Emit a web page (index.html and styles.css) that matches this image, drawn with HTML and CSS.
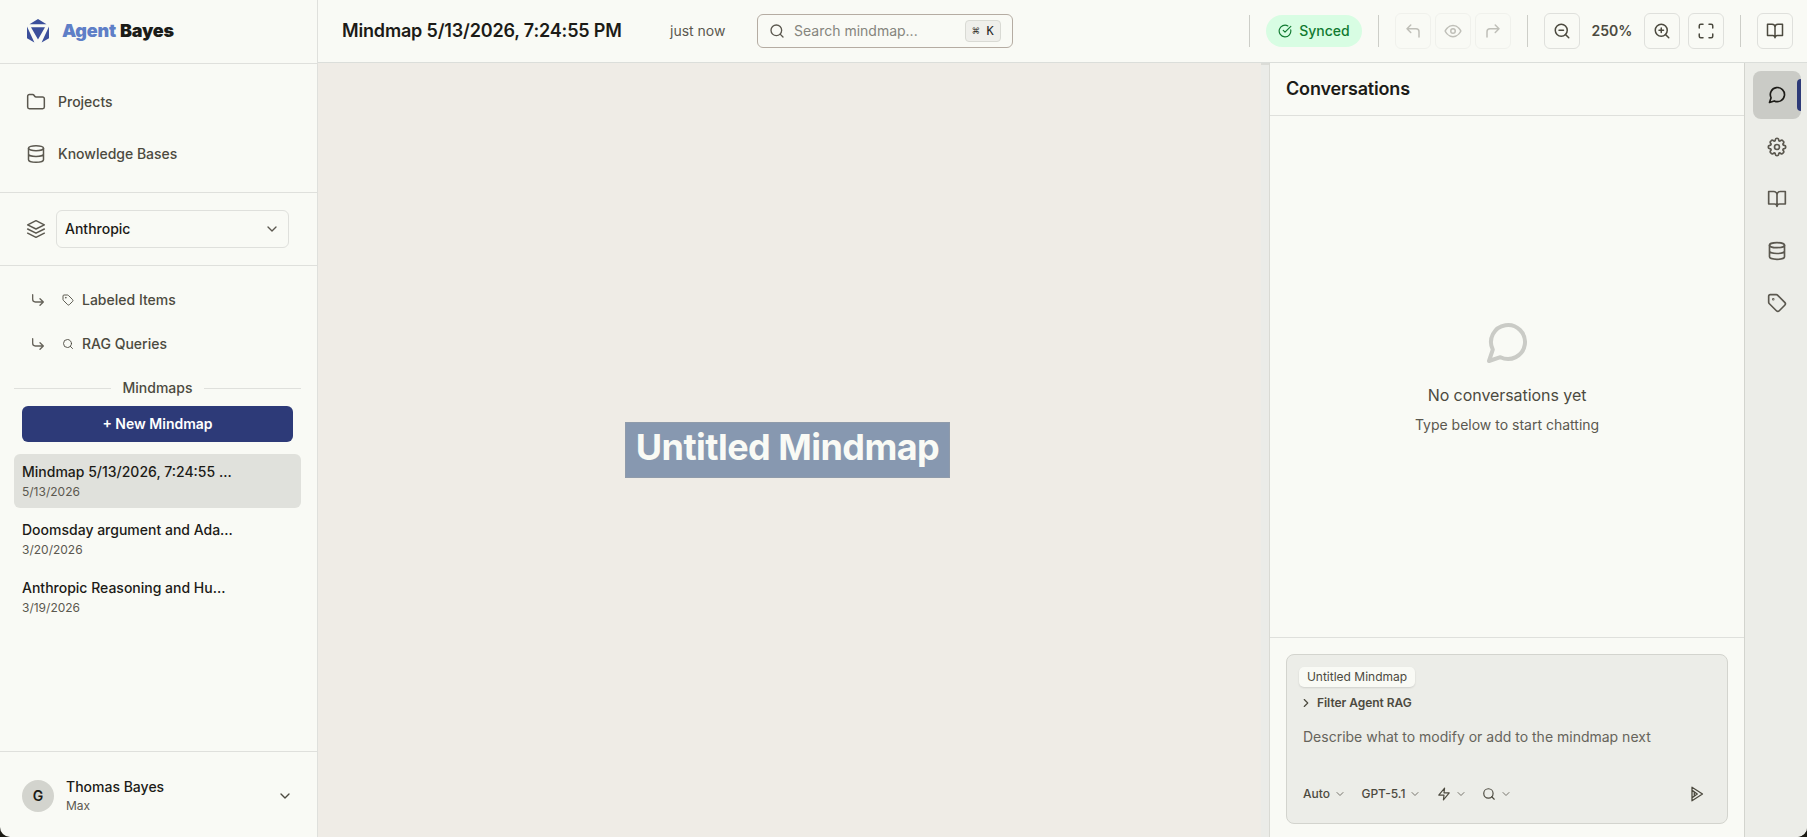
FILE: index.html
```
<!DOCTYPE html>
<html lang="en">
<head>
<meta charset="utf-8">
<title>Agent Bayes</title>
<link rel="stylesheet" href="styles.css">
</head>
<body>
<svg class="defs" aria-hidden="true">
  <symbol id="folder" viewBox="0 0 24 24"><path d="M4 20h16a2 2 0 0 0 2-2V8a2 2 0 0 0-2-2h-7.93a2 2 0 0 1-1.66-.9l-.82-1.2A2 2 0 0 0 7.93 3H4a2 2 0 0 0-2 2v13a2 2 0 0 0 2 2Z"/></symbol>
  <symbol id="database" viewBox="0 0 24 24"><ellipse cx="12" cy="5" rx="9" ry="3"/><path d="M3 5v14a9 3 0 0 0 18 0V5M3 12a9 3 0 0 0 18 0"/></symbol>
  <symbol id="layers" viewBox="0 0 24 24"><path d="m12 2-10 5 10 5 10-5zM2 12l10 5 10-5M2 17l10 5 10-5"/></symbol>
  <symbol id="down" viewBox="0 0 24 24"><path d="m6 9 6 6 6-6"/></symbol>
  <symbol id="right" viewBox="0 0 24 24"><path d="m9 18 6-6-6-6"/></symbol>
  <symbol id="branch" viewBox="0 0 24 24"><path d="m15 10 5 5-5 5M4 4v7a4 4 0 0 0 4 4h12"/></symbol>
  <symbol id="tag" viewBox="0 0 24 24"><path d="M12.586 2.586A2 2 0 0 0 11.172 2H4a2 2 0 0 0-2 2v7.172a2 2 0 0 0 .586 1.414l8.704 8.704a2.426 2.426 0 0 0 3.42 0l6.58-6.58a2.426 2.426 0 0 0 0-3.42z"/><circle cx="7.5" cy="7.5" r=".5"/></symbol>
  <symbol id="search" viewBox="0 0 24 24"><circle cx="11" cy="11" r="8"/><path d="m21 21-4.3-4.3"/></symbol>
  <symbol id="zoom-out" viewBox="0 0 24 24"><circle cx="11" cy="11" r="8"/><path d="m21 21-4.35-4.35M8 11h6"/></symbol>
  <symbol id="zoom-in" viewBox="0 0 24 24"><circle cx="11" cy="11" r="8"/><path d="m21 21-4.35-4.35M8 11h6M11 8v6"/></symbol>
  <symbol id="check" viewBox="0 0 24 24"><path d="M21.8 10A10 10 0 1 1 17 3.335M9 11l3 3L22 4"/></symbol>
  <symbol id="undo" viewBox="0 0 24 24"><path d="M20 20v-7a4 4 0 0 0-4-4H4M9 14 4 9l5-5"/></symbol>
  <symbol id="redo" viewBox="0 0 24 24"><path d="M4 20v-7a4 4 0 0 1 4-4h12M15 14l5-5-5-5"/></symbol>
  <symbol id="eye" viewBox="0 0 24 24"><path d="M1.5 12S5 4.5 12 4.5 22.500 12 22.500 12 19 19.500 12 19.500 1.500 12 1.500 12Z"/><circle cx="12" cy="12" r="3"/></symbol>
  <symbol id="frame" viewBox="0 0 24 24"><path d="M8 3H5a2 2 0 0 0-2 2v3M21 8V5a2 2 0 0 0-2-2h-3M3 16v3a2 2 0 0 0 2 2h3M16 21h3a2 2 0 0 0 2-2v-3"/></symbol>
  <symbol id="book" viewBox="0 0 24 24"><path d="M2 3h6a4 4 0 0 1 4 4v14a3 3 0 0 0-3-3H2zM22 3h-6a4 4 0 0 0-4 4v14a3 3 0 0 1 3-3h7z"/></symbol>
  <symbol id="chat" viewBox="0 0 24 24"><path d="m3 21 1.9-5.7a8.5 8.5 0 1 1 3.8 3.8z"/></symbol>
  <symbol id="gear" viewBox="0 0 24 24"><path d="M12 1.500c1 0 1.800.7 2 1.700l.2 1.200 1.300.55 1-.7a2 2 0 0 1 2.600.3l.35.35a2 2 0 0 1 .3 2.600l-.7 1 .55 1.300 1.200.2c1 .2 1.700 1 1.700 2s-.7 1.800-1.700 2l-1.200.2-.55 1.300.7 1a2 2 0 0 1-.3 2.600l-.35.35a2 2 0 0 1-2.600.3l-1-.7-1.300.55-.2 1.200c-.2 1-1 1.700-2 1.700s-1.800-.7-2-1.700l-.2-1.200-1.300-.55-1 .7a2 2 0 0 1-2.600-.3l-.35-.35a2 2 0 0 1-.3-2.600l.7-1-.55-1.300-1.200-.2c-1-.2-1.700-1-1.700-2s.7-1.800 1.700-2l1.200-.2.55-1.300-.7-1a2 2 0 0 1 .3-2.600l.35-.35a2 2 0 0 1 2.600-.3l1 .7 1.300-.55.2-1.200c.2-1 1-1.700 2-1.700Z"/><circle cx="12" cy="12" r="3"/></symbol>
  <symbol id="bolt" viewBox="0 0 24 24"><path d="M13 2 3 14h9l-1 8 10-12h-9z"/></symbol>
  <symbol id="send" viewBox="0 0 16 16"><path d="M3 1.200 13.500 8 3 14.800zM3.500 4.600 8.300 8l-4.800 3.400M5.300 6v4"/></symbol>
</svg>
<div class="app">
  <aside class="sidebar">
    <div class="brand">
      <svg class="logo" viewBox="0 0 24 24"><path d="M12 0 3.500 5.200h17zM5 8.300h14L12 20.500zM1 7.500v11.700l7.400 4.300zM23 7.500v11.700l-7.400 4.300z"/></svg>
      <div class="wordmark"><span>Agent</span> Bayes</div>
    </div>
    <nav class="nav">
      <a class="nav-item"><svg class="i20"><use href="#folder"/></svg>Projects</a>
      <a class="nav-item"><svg class="i20"><use href="#database"/></svg>Knowledge Bases</a>
    </nav>
    <div class="project">
      <svg class="i20"><use href="#layers"/></svg>
      <div class="select">Anthropic<svg class="i16"><use href="#down"/></svg></div>
    </div>
    <div class="sub">
      <a class="sub-item"><svg class="i16"><use href="#branch"/></svg><svg class="i12"><use href="#tag"/></svg>Labeled Items</a>
      <a class="sub-item"><svg class="i16"><use href="#branch"/></svg><svg class="i12"><use href="#search"/></svg>RAG Queries</a>
    </div>
    <div class="divider">Mindmaps</div>
    <button class="new">+ New Mindmap</button>
    <ul class="maps">
      <li class="map active"><b>Mindmap 5/13/2026, 7:24:55 ...</b><small>5/13/2026</small></li>
      <li class="map"><b>Doomsday argument and Ada...</b><small>3/20/2026</small></li>
      <li class="map"><b>Anthropic Reasoning and Hu...</b><small>3/19/2026</small></li>
    </ul>
    <div class="user">
      <div class="avatar">G</div>
      <div class="who"><b>Thomas Bayes</b><small>Max</small></div>
      <svg class="i16"><use href="#down"/></svg>
    </div>
  </aside>
  <div class="main">
    <header class="topbar">
      <h1>Mindmap 5/13/2026, 7:24:55 PM</h1>
      <span class="ago">just now</span>
      <div class="search"><svg class="i16"><use href="#search"/></svg><span>Search mindmap...</span><kbd>⌘ K</kbd></div>
      <div class="tools">
        <i class="sep"></i>
        <div class="synced"><svg class="i14"><use href="#check"/></svg>Synced</div>
        <i class="sep"></i>
        <div class="history">
          <button class="tool"><svg class="i18"><use href="#undo"/></svg></button>
          <button class="tool"><svg class="i18"><use href="#eye"/></svg></button>
          <button class="tool"><svg class="i18"><use href="#redo"/></svg></button>
        </div>
        <i class="sep"></i>
        <div class="zoom">
          <button class="tool"><svg class="i18"><use href="#zoom-out"/></svg></button>
          <span class="level">250%</span>
          <button class="tool"><svg class="i18"><use href="#zoom-in"/></svg></button>
          <button class="tool"><svg class="i18"><use href="#frame"/></svg></button>
        </div>
        <i class="sep"></i>
        <button class="tool"><svg class="i18"><use href="#book"/></svg></button>
      </div>
    </header>
    <div class="work">
      <main class="canvas"><div class="node">Untitled Mindmap</div></main>
      <div class="handle"></div>
      <section class="panel">
        <h2>Conversations</h2>
        <div class="empty">
          <svg><use href="#chat"/></svg>
          <p class="lead">No conversations yet</p>
          <p class="hint">Type below to start chatting</p>
        </div>
        <div class="compose">
          <div class="box">
            <span class="chip">Untitled Mindmap</span>
            <div class="filter"><svg class="i14"><use href="#right"/></svg>Filter Agent RAG</div>
            <div class="placeholder">Describe what to modify or add to the mindmap next</div>
            <div class="options">
              <span class="opt">Auto<svg class="i12"><use href="#down"/></svg></span>
              <span class="opt">GPT-5.1<svg class="i12"><use href="#down"/></svg></span>
              <span class="opt"><svg class="i14"><use href="#bolt"/></svg><svg class="i12"><use href="#down"/></svg></span>
              <span class="opt"><svg class="i14"><use href="#search"/></svg><svg class="i12"><use href="#down"/></svg></span>
              <svg class="i16 send"><use href="#send"/></svg>
            </div>
          </div>
        </div>
      </section>
      <nav class="rail">
        <button class="tab on"><svg class="i20"><use href="#chat"/></svg></button>
        <button class="tab"><svg class="i20"><use href="#gear"/></svg></button>
        <button class="tab"><svg class="i20"><use href="#book"/></svg></button>
        <button class="tab"><svg class="i20"><use href="#database"/></svg></button>
        <button class="tab"><svg class="i20"><use href="#tag"/></svg></button>
      </nav>
    </div>
  </div>
</div>
</body>
</html>
```
FILE: styles.css
```
* { box-sizing: border-box; margin: 0; padding: 0; }
body { background: #1c1b14; font: 14px/20px Inter, "Liberation Sans", sans-serif; color: #1c1b17; }
svg { fill: none; stroke: currentColor; stroke-width: 2; stroke-linecap: round; stroke-linejoin: round; flex: none; display: block; }
.defs { display: none; }
button { font: inherit; border: 0; background: none; color: inherit; }
.i20 { width: 20px; height: 20px; stroke-width: 2; }
.i18 { width: 18px; height: 18px; }
.i16 { width: 16px; height: 16px; }
.i14 { width: 14px; height: 14px; }
.i12 { width: 12px; height: 12px; }

.app { display: flex; width: 1807px; height: 837px; background: #f9faf5; border-radius: 0 0 10px 10px; overflow: hidden; }

.sidebar { flex: none; width: 318px; border-right: 1px solid #dfe0dc; display: flex; flex-direction: column; }
.brand { height: 64px; border-bottom: 1px solid #dfe0dc; display: flex; align-items: center; gap: 12px; padding: 0 26px 2px; }
.logo { width: 24px; height: 24px; fill: #3b4f9b; stroke: none; }
.wordmark { font-size: 18px; font-weight: 900; letter-spacing: -0.2px; word-spacing: 0.5px; color: #1b1c18; white-space: nowrap; }
.wordmark span { color: #5f7fc7; }
.nav { height: 129px; border-bottom: 1px solid #dfe0dc; padding: 16px 26px; display: flex; flex-direction: column; gap: 8px; }
.nav-item { height: 44px; display: flex; align-items: center; gap: 12px; font-weight: 500; color: #4c4a3f; }
.nav-item svg, .project > svg { color: #5b584f; stroke-width: 1.8; }
.project { height: 73px; border-bottom: 1px solid #dfe0dc; display: flex; align-items: center; gap: 10px; padding-left: 26px; }
.select { width: 233px; height: 38px; border: 1px solid #dfe0dc; border-radius: 6px; padding: 0 8px; display: flex; align-items: center; justify-content: space-between; font-weight: 500; }
.select svg { color: #5b584f; }
.sub { padding: 12px 30px 0; }
.sub-item { height: 44px; display: flex; align-items: center; font-weight: 500; color: #4c4a3f; }
.sub-item .i16 { margin-right: 16px; color: #66635a; }
.sub-item .i12 { margin-right: 8px; stroke-width: 1.8; }
.divider { height: 20px; margin: 12px 16px 8px 14px; display: flex; align-items: center; gap: 12px; font-weight: 500; color: #4c4a3f; }
.divider::before, .divider::after { content: ""; flex: 1; height: 1px; background: #dfe0dc; }
.new { height: 36px; margin: 0 24px 12px 22px; border-radius: 6px; background: #2d3a78; color: #fff; font-weight: 600; }
.maps { list-style: none; margin: 0 16px 0 14px; display: flex; flex-direction: column; gap: 4px; }
.map { height: 54px; border-radius: 6px; padding: 8px 8px; }
.map b, .map small { display: block; }
.map b, .who b { font-weight: 500; line-height: 20px; }
.map small, .who small { font-size: 12px; line-height: 18px; color: #5b584f; }
.map small { line-height: 20px; }
.map.active { background: #e0e1dc; }
.user { margin-top: auto; height: 86px; border-top: 1px solid #dfe0dc; display: flex; align-items: center; padding: 2px 24px 0 22px; }
.avatar { width: 32px; height: 32px; border-radius: 50%; background: #d3d4ce; text-align: center; line-height: 32px; font-weight: 600; }
.who { margin: 0 auto 0 12px; }
.who b, .who small { display: block; }
.user svg { color: #4c4a3f; }

.main { flex: 1; min-width: 0; display: flex; flex-direction: column; }
.topbar { height: 63px; border-bottom: 1px solid #dbdeda; display: flex; align-items: center; padding: 0 14px 0 24px; }
h1 { font-size: 18px; font-weight: 600; width: 328px; white-space: nowrap; letter-spacing: -0.17px; }
.ago { width: 87px; color: #5b584f; }
.search { width: 256px; height: 34px; border: 1px solid #b5aca2; border-radius: 6px; display: flex; align-items: center; gap: 9px; padding: 0 11px; color: #5b584f; }
.search span { flex: 1; color: #85857d; }
kbd { width: 36px; height: 22px; border: 1px solid #d9dad4; border-radius: 4px; background: #efefeb; color: #26251f; font: 12px/20px "DejaVu Sans Mono", monospace; text-align: center; }
.tools { margin-left: auto; display: flex; align-items: center; gap: 16px; }
.sep { width: 1px; height: 32px; background: #cdcec8; }
.synced { width: 96px; height: 32px; border-radius: 16px; background: #d8fde3; color: #117a31; font-weight: 500; display: flex; align-items: center; justify-content: center; gap: 7px; }
.history { display: flex; gap: 4px; opacity: .33; }
.zoom { display: flex; align-items: center; gap: 8px; }
.level { width: 48px; text-align: center; font-weight: 600; color: #4c4a3f; }
.tool { width: 36px; height: 36px; border: 1px solid #dfe0dc; border-radius: 6px; display: flex; align-items: center; justify-content: center; color: #4c4a3f; }

.work { flex: 1; display: flex; }
.canvas { flex: none; width: 943px; background: #efece6; display: flex; flex-direction: column; align-items: flex-start; padding: 359px 0 0 307px; }
.node { width: 325px; height: 56px; background: #8798b0; border: 1px solid #8f9bab; color: #f9faf5; font-size: 36px; line-height: 48px; font-weight: 700; letter-spacing: -0.55px; text-align: center; white-space: nowrap; }
.handle { flex: none; width: 8px; background: #ebece8; border-top: 2px solid #dbdcd7; }
.panel { flex: none; width: 475px; border-left: 1px solid #d9dad4; display: flex; flex-direction: column; }
h2 { height: 53px; border-bottom: 1px solid #dfe0dc; padding-left: 16px; font-size: 18px; line-height: 51px; font-weight: 600; letter-spacing: -0.17px; }
.empty { flex: 1; display: flex; flex-direction: column; align-items: center; justify-content: center; color: #4c4a3f; }
.empty svg { width: 48px; height: 48px; color: #cacbc6; margin-bottom: 16px; }
.lead { font-size: 16px; line-height: 24px; margin-bottom: 8px; letter-spacing: -0.06px; }
.hint { color: #5b584f; }
.compose { height: 200px; border-top: 1px solid #dfe0dc; padding: 16px 16px 13px; }
.box { height: 170px; border: 1px solid #d3d4ce; border-radius: 8px; background: #ecede8; padding: 12px; color: #4c4a3f; }
.chip { display: block; width: 116px; height: 20px; border-radius: 5px; background: #f9faf5; box-shadow: 0 1px 2px rgba(0,0,0,.12); font-size: 12px; line-height: 20px; text-align: center; }
.filter { display: flex; align-items: center; gap: 4px; height: 20px; margin-top: 6px; font-size: 12px; font-weight: 600; letter-spacing: -0.04px; }
.placeholder { margin: 14px 0 0 4px; color: #66645b; }
.options { display: flex; align-items: center; height: 20px; margin: 37px 0 0 4px; font-size: 12px; font-weight: 500; }
.opt { display: flex; align-items: center; gap: 4px; margin-right: 15.5px; }
.opt .i12 { color: #77756d; }
.send { margin: 0 10px 0 auto; stroke-width: 1.3; }
.rail { flex: 1; border-left: 1px solid #d3d4ce; background: #ecede8; padding: 8px; display: flex; flex-direction: column; gap: 4px; }
.tab { width: 48px; height: 48px; border-radius: 8px; display: flex; align-items: center; justify-content: center; color: #5b584f; }
.tab.on { position: relative; background: #cacbc6; color: #1c1b17; }
.tab.on::after { content: ""; position: absolute; right: 0; top: 8px; width: 4px; height: 32px; border-radius: 4px 0 0 4px; background: #2d3a78; }
```
